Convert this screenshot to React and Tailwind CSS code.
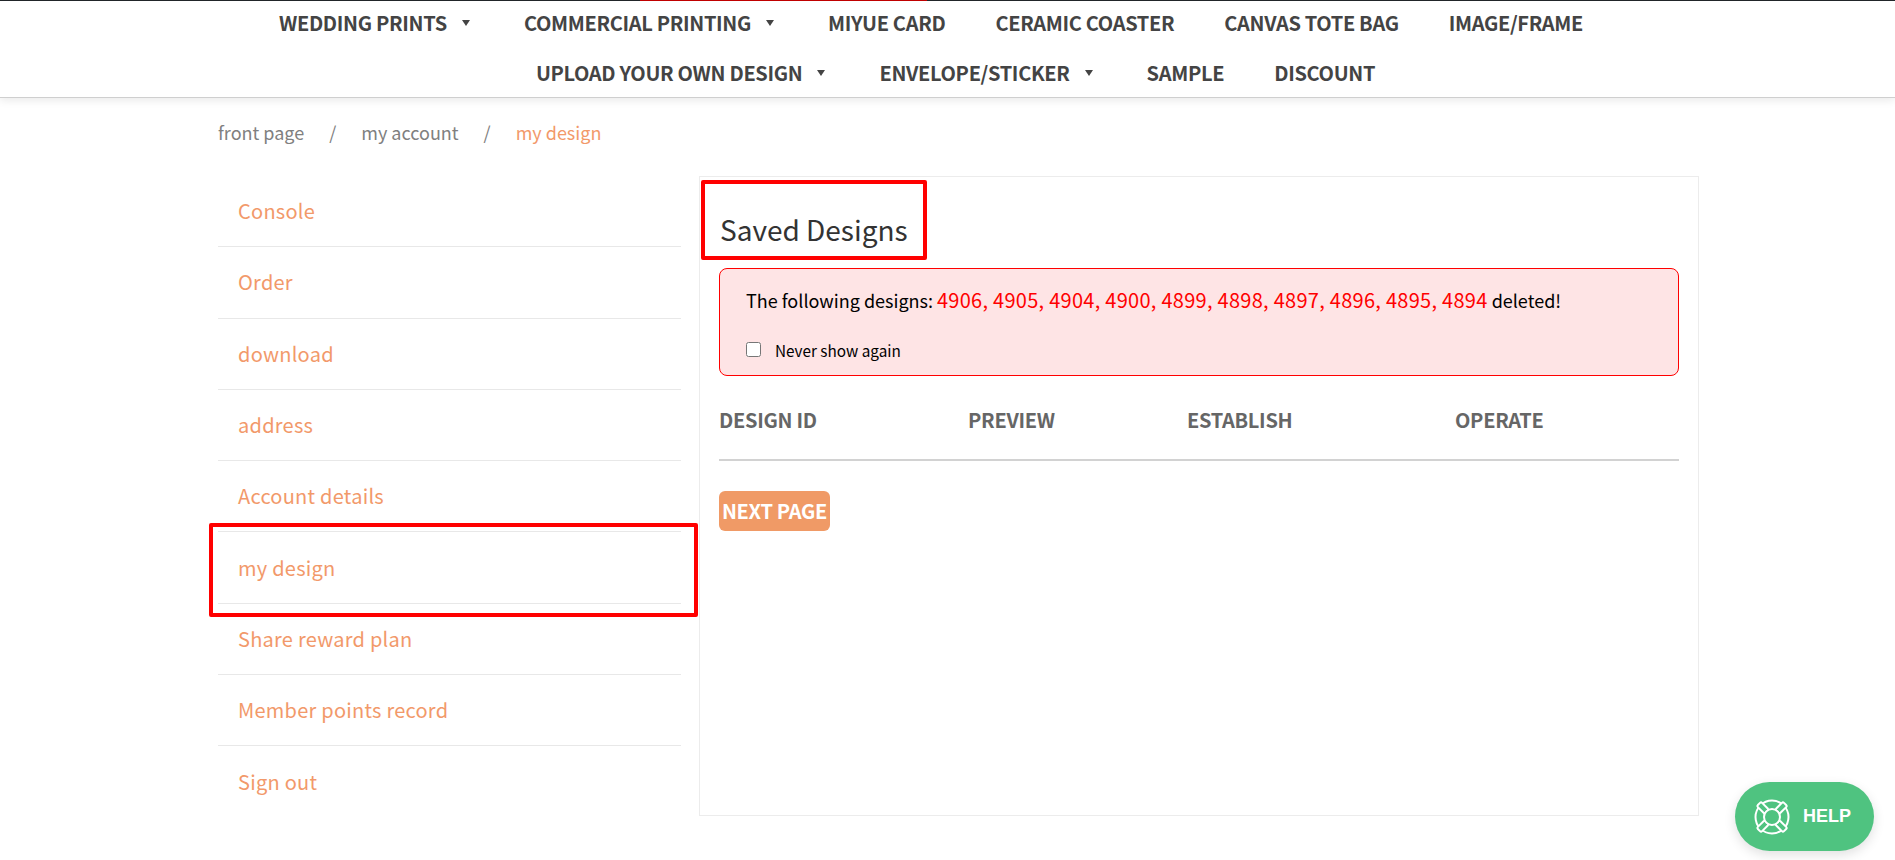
const rowOne = [
  { label: 'WEDDING PRINTS', arrow: true },
  { label: 'COMMERCIAL PRINTING', arrow: true },
  { label: 'MIYUE CARD' },
  { label: 'CERAMIC COASTER' },
  { label: 'CANVAS TOTE BAG' },
  { label: 'IMAGE/FRAME' },
];

const rowTwo = [
  { label: 'UPLOAD YOUR OWN DESIGN', arrow: true },
  { label: 'ENVELOPE/STICKER', arrow: true },
  { label: 'SAMPLE' },
  { label: 'DISCOUNT' },
];

const sideLinks = [
  'Console',
  'Order',
  'download',
  'address',
  'Account details',
  'my design',
  'Share reward plan',
  'Member points record',
  'Sign out',
];

const NavItem = ({ label, arrow }) => (
  <a className="flex items-center text-[20px] font-bold leading-[43px] tracking-[-0.33px] text-[#444444]">
    {label}
    {arrow && (
      <svg className="ml-[15px] mr-[4px] mt-[1px]" width="8" height="6" viewBox="0 0 8 6">
        <path d="M0 0H8L4 6Z" fill="#444444" />
      </svg>
    )}
  </a>
);

const HelpIcon = () => (
  <svg width="36" height="36" viewBox="0 0 36 36" fill="none" stroke="white" strokeWidth="2">
    <circle cx="18" cy="18" r="16.5" />
    {[45, 135, 225, 315].map((deg) => (
      <rect key={deg} x="15" y="-0.5" width="6" height="11" rx="1.5" fill="#4fc380" transform={`rotate(${deg} 18 18)`} />
    ))}
    <circle cx="18" cy="18" r="8" fill="#4fc380" />
  </svg>
);

const App = () => {
  return (
    <div className="relative h-[860px] overflow-hidden bg-white font-['Noto_Sans_CJK_SC','Noto_Sans',sans-serif]">
      <header className="relative h-[98px] border-t border-b border-t-[#212529] border-b-[#cfcfcf] shadow-[0_3px_8px_rgba(0,0,0,0.08)]">
        <div className="absolute left-[640px] top-[-1px] h-[1px] w-[287px] bg-[#c00000]" />
        <div className="flex justify-center gap-[50px] pr-[33px]">
          {rowOne.map((item) => <NavItem key={item.label} {...item} />)}
        </div>
        <div className="mt-[7px] flex justify-center gap-[50px] pl-[16px]">
          {rowTwo.map((item) => <NavItem key={item.label} {...item} />)}
        </div>
      </header>

      <nav className="ml-[218px] mt-[20px] flex h-[28px] items-center text-[18px] text-[#808080]">
        <a>front page</a>
        <span className="mx-[25px]">/</span>
        <a>my account</a>
        <span className="mx-[25px]">/</span>
        <a className="text-[#f2996a]">my design</a>
      </nav>

      <div className="ml-[218px] mt-[30px] flex">
        <ul className="w-[463px] text-[20px] tracking-[0.25px] text-[#f2996a]">
          {sideLinks.map((link, i) => (
            <li
              key={link}
              className={`flex h-[71.3px] items-center pl-[20px] ${i < sideLinks.length - 1 ? 'border-b border-[#e8e8e8]' : ''}`}
            >
              {link}
            </li>
          ))}
        </ul>

        <main className="ml-[18px] h-[640px] w-[1000px] border border-[#ececec] px-[19px]">
          <h2 className="mt-[31px] pl-[1px] text-[28px] leading-[42px] text-[#333333]">Saved Designs</h2>

          <div className="mt-[18px] h-[108px] w-[960px] rounded-[8px] border border-[#ff0000] bg-[#fee4e5] pl-[26px] pt-[16px] text-black">
            <p className="text-[18px] leading-[30px]">
              The following designs: <span className="text-[20px] tracking-[0.28px] text-[#ff0000]">4906, 4905, 4904, 4900, 4899, 4898, 4897, 4896, 4895, 4894</span> deleted!
            </p>
            <label className="mt-[23px] flex items-center text-[15.3px] leading-[24px]">
              <input type="checkbox" className="-mt-[2px] mr-[14px] h-[15px] w-[15px]" />
              Never show again
            </label>
          </div>

          <div className="mt-[28px] flex h-[57px] w-[960px] border-b-2 border-[#d2d2d2] text-[20px] font-bold leading-[32px] tracking-[-0.3px] text-[#666666]">
            <span className="w-[249px]">DESIGN ID</span>
            <span className="w-[219px]">PREVIEW</span>
            <span className="w-[268px]">ESTABLISH</span>
            <span>OPERATE</span>
          </div>

          <button className="mt-[30px] flex h-[40px] w-[111px] items-center justify-center whitespace-nowrap rounded-[6px] bg-[#f09a66] text-[20px] font-bold tracking-[-0.3px] text-white">
            NEXT PAGE
          </button>
        </main>
      </div>

      {/* annotation boxes drawn over the page */}
      <div className="absolute left-[701px] top-[180px] h-[80px] w-[226px] rounded-[2px] border-[4px] border-[#ff0000]" />
      <div className="absolute left-[209px] top-[523px] h-[94px] w-[489px] rounded-[2px] border-[4px] border-[#ff0000]" />

      <button className="absolute left-[1735px] top-[782px] flex h-[69px] w-[139px] items-center rounded-full bg-[#4fc380] pl-[19px] shadow-[0_4px_12px_rgba(0,0,0,0.12)]">
        <HelpIcon />
        <span className="ml-[13px] font-['Liberation_Sans',sans-serif] text-[18px] font-bold text-white">HELP</span>
      </button>
    </div>
  );
};

export default App;
